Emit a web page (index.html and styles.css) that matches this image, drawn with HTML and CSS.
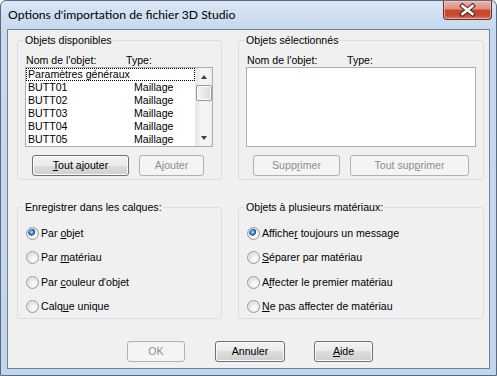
FILE: index.html
```html
<!DOCTYPE html>
<html lang="fr">
<head>
<meta charset="utf-8">
<title>Options d'importation de fichier 3D Studio</title>
<link rel="stylesheet" href="styles.css">
</head>
<body>
<div class="window">
  <div class="titlebar">
    <span class="title">Options d'importation de fichier 3D Studio</span>
    <button class="close" aria-label="Fermer">
      <svg width="47" height="18" viewBox="0 0 47 18">
        <path d="M18.5 5 L28.5 13 M28.5 5 L18.5 13" stroke="#4a2a24" stroke-width="4.8" stroke-linecap="square" fill="none"/>
        <path d="M18.5 5 L28.5 13 M28.5 5 L18.5 13" stroke="#ffffff" stroke-width="2.6" stroke-linecap="square" fill="none"/>
      </svg>
    </button>
  </div>
  <div class="client">
    <div class="groups">
      <fieldset class="group">
        <legend>Objets disponibles</legend>
        <div class="list-body">
          <div class="cols"><span class="col-name">Nom de l'objet:</span><span>Type:</span></div>
          <div class="listbox lb-left">
            <ul class="items">
              <li class="focus"><span class="c-name">Paramètres généraux</span></li>
              <li><span class="c-name">BUTT01</span><span>Maillage</span></li>
              <li><span class="c-name">BUTT02</span><span>Maillage</span></li>
              <li><span class="c-name">BUTT03</span><span>Maillage</span></li>
              <li><span class="c-name">BUTT04</span><span>Maillage</span></li>
              <li><span class="c-name">BUTT05</span><span>Maillage</span></li>
            </ul>
            <div class="vscroll">
              <div class="sb-btn"><span class="tri-up"></span></div>
              <div class="thumb"></div>
              <div class="track"></div>
              <div class="sb-btn"><span class="tri-down"></span></div>
            </div>
          </div>
          <div class="btn-row">
            <button class="btn w-toutaj"><u>T</u>out ajouter</button>
            <button class="btn w-aj" disabled>A<u>j</u>outer</button>
          </div>
        </div>
      </fieldset>

      <fieldset class="group">
        <legend>Objets sélectionnés</legend>
        <div class="list-body">
          <div class="cols"><span class="col-name">Nom de l'objet:</span><span>Type:</span></div>
          <div class="listbox lb-right"></div>
          <div class="btn-row">
            <button class="btn w-supp" disabled>Supp<u>r</u>imer</button>
            <button class="btn w-toutsupp" disabled>Tout sup<u>p</u>rimer</button>
          </div>
        </div>
      </fieldset>

      <fieldset class="group">
        <legend>Enregistrer dans les calques:</legend>
        <div class="radio-body">
          <label class="radio-row"><input type="radio" name="calq" checked><span>Par <u>o</u>bjet</span></label>
          <label class="radio-row"><input type="radio" name="calq"><span>Par <u>m</u>atériau</span></label>
          <label class="radio-row"><input type="radio" name="calq"><span>Par <u>c</u>ouleur d'objet</span></label>
          <label class="radio-row"><input type="radio" name="calq"><span>Calq<u>u</u>e unique</span></label>
        </div>
      </fieldset>

      <fieldset class="group">
        <legend>Objets à plusieurs matériaux:</legend>
        <div class="radio-body">
          <label class="radio-row"><input type="radio" name="mat" checked><span>Affiche<u>r</u> toujours un message</span></label>
          <label class="radio-row"><input type="radio" name="mat"><span><u>S</u>éparer par matériau</span></label>
          <label class="radio-row"><input type="radio" name="mat"><span>A<u>f</u>fecter le premier matériau</span></label>
          <label class="radio-row"><input type="radio" name="mat"><span><u>N</u>e pas affecter de matériau</span></label>
        </div>
      </fieldset>
    </div>

    <div class="dlg-buttons">
      <button class="btn w-ok" disabled>OK</button>
      <button class="btn w-annuler">Annuler</button>
      <button class="btn w-aide"><u>A</u>ide</button>
    </div>
  </div>
</div>
</body>
</html>
```

FILE: styles.css
```css
html, body {
  margin: 0;
  padding: 0;
}

body {
  font-family: "Liberation Sans", Arial, sans-serif;
  font-size: 10.6px;
  color: #000;
  background: #ffffff;
}

.window {
  width: 497px;
  height: 376px;
  box-sizing: border-box;
  border: 1px solid #5b6a7d;
  border-radius: 6px 6px 0 0;
  background: linear-gradient(#d9e6f5 0px, #c6d9ef 28px, #c1d5ec 100%);
  display: flex;
  flex-direction: column;
  overflow: hidden;
}

.titlebar {
  height: 28px;
  display: flex;
  align-items: flex-start;
  flex: none;
}

.title {
  font-family: Lato, "Noto Sans", sans-serif;
  font-size: 12.2px;
  line-height: 28px;
  padding-left: 7px;
  color: #000;
  white-space: nowrap;
}

.close {
  margin: 0 4px 0 auto;
  width: 47px;
  height: 18px;
  padding: 0;
  border: 1px solid #6b2d22;
  border-top: none;
  border-radius: 0 0 4px 4px;
  background: linear-gradient(#eab1a4 0%, #e08e7c 45%, #c9452c 50%, #c84a32 80%, #dc7a5f 100%);
  box-shadow: inset 0 0 0 1px rgba(255, 220, 210, 0.55);
  display: flex;
  align-items: center;
  justify-content: center;
  box-sizing: content-box;
}

.close svg {
  display: block;
}

.client {
  flex: 1;
  margin: 0 6px 6px 6px;
  border: 1px solid #6f8299;
  background: #f0f0f0;
  padding: 4px 0 0 9px;
}

.groups {
  display: grid;
  grid-template-columns: 205px 246px;
  column-gap: 16px;
  row-gap: 21px;
}

fieldset.group {
  margin: 0;
  padding: 0;
  border: 1px solid #d5dfe5;
  border-radius: 3px;
  min-width: 0;
}

fieldset.group legend {
  margin-left: 5px;
  padding: 0 1px 0 2px;
  line-height: 13px;
  height: 13px;
}

.list-body {
  padding: 7px 0 3px 7px;
}

.cols {
  display: flex;
  height: 13px;
  line-height: 13px;
  padding-left: 1px;
}

.col-name {
  width: 100px;
}

.listbox {
  height: 80px;
  box-sizing: border-box;
  border: 1px solid #abadb3;
  background: #ffffff;
  display: flex;
}

.lb-left {
  width: 188px;
}

.lb-right {
  width: 230px;
}

.items {
  list-style: none;
  margin: 0;
  padding: 0;
  flex: 1;
  overflow: hidden;
}

.items li {
  display: flex;
  height: 13px;
  line-height: 13px;
  padding-left: 2px;
  white-space: nowrap;
}

.items li.focus {
  outline: 1px dotted #000;
  outline-offset: -1px;
}

.c-name {
  width: 106px;
}

.vscroll {
  width: 17px;
  flex: none;
  display: flex;
  flex-direction: column;
  background: linear-gradient(90deg, #e6e6e6, #f4f4f4 30%, #f4f4f4 70%, #ececec);
  border-left: 1px solid #eaeaea;
  box-sizing: border-box;
}

.sb-btn {
  height: 17px;
  display: flex;
  align-items: center;
  justify-content: center;
}

.tri-up {
  width: 0;
  height: 0;
  border-left: 3.5px solid transparent;
  border-right: 3.5px solid transparent;
  border-bottom: 4px solid #404040;
}

.tri-down {
  width: 0;
  height: 0;
  border-left: 3.5px solid transparent;
  border-right: 3.5px solid transparent;
  border-top: 4px solid #404040;
}

.thumb {
  height: 16px;
  box-sizing: border-box;
  border: 1px solid #979797;
  border-radius: 2px;
  background: linear-gradient(90deg, #f5f5f5, #e9e9e9 50%, #d9d9d9);
  box-shadow: inset 0 0 0 1px #ffffff;
}

.track {
  flex: 1;
}

.btn-row {
  display: flex;
  gap: 10px;
  margin: 8px 0 0 7px;
}

.btn {
  font-family: inherit;
  font-size: inherit;
  color: #000;
  height: 21px;
  padding: 0;
  margin: 0;
  box-sizing: border-box;
  border: 1px solid #707070;
  border-radius: 3px;
  background: linear-gradient(#f2f2f2 0%, #ebebeb 50%, #dddddd 50%, #cfcfcf 100%);
  box-shadow: inset 0 0 0 1px #fbfbfb;
  line-height: 17px;
  text-align: center;
}

.btn:disabled {
  color: #8d8d8d;
  border-color: #adb2b5;
  background: #f4f4f4;
  box-shadow: none;
}

.btn u {
  text-underline-offset: 1px;
}

.w-toutaj { width: 97px; }
.w-aj { width: 65px; }
.w-supp { width: 87px; }
.w-toutsupp { width: 119px; }

.radio-body {
  padding: 12.5px 0 4.5px 8px;
  display: flex;
  flex-direction: column;
  gap: 11.67px;
}

.radio-row {
  display: flex;
  align-items: center;
  gap: 2px;
  height: 13px;
  line-height: 13px;
  white-space: nowrap;
}

.radio-row input {
  appearance: none;
  -webkit-appearance: none;
  width: 13px;
  height: 13px;
  margin: 0;
  box-sizing: border-box;
  border-radius: 50%;
  border: 1px solid #9a9a9a;
  background: radial-gradient(circle at 65% 70%, #ffffff 0%, #f2f2f2 35%, #d2d2d2 80%);
  box-shadow: inset 0 0 0 1px #ececec;
  flex: none;
}

.radio-row input:checked {
  background:
    radial-gradient(circle at 42% 38%, #c6e6fb 0, #5fb1ea 1.3px, #1e6cb3 2.6px, #1a4f86 3.3px, rgba(26, 79, 134, 0) 3.6px),
    radial-gradient(circle at 65% 70%, #ffffff 0%, #f2f2f2 35%, #d2d2d2 80%);
}

.dlg-buttons {
  display: flex;
  margin: 22px 0 0 110px;
}

.w-ok { width: 58px; }
.w-annuler { width: 70px; margin-left: 30px; }
.w-aide { width: 59px; margin-left: 29px; }
```
